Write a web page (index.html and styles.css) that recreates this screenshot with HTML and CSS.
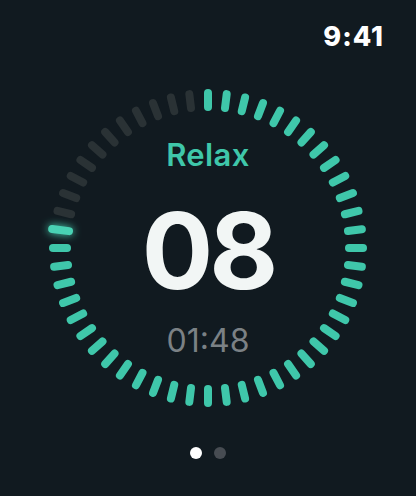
FILE: index.html
```html
<!DOCTYPE html>
<html lang="en">
<head>
<meta charset="utf-8">
<title>Relax timer</title>
<link rel="stylesheet" href="styles.css">
</head>
<body>
<div class="screen">
  <header class="status">
    <span class="clock">9:41</span>
  </header>
  <main class="timer">
    <svg class="ring" viewBox="0 0 336 336" width="336" height="336" aria-hidden="true">
      <defs>
        <filter id="glow" filterUnits="userSpaceOnUse" x="0" y="0" width="336" height="336">
          <feGaussianBlur in="SourceGraphic" stdDeviation="4" result="b"/>
          <feMerge><feMergeNode in="b"/><feMergeNode in="SourceGraphic"/></feMerge>
        </filter>
      </defs>
      <g class="on">
        <line x1="168" y1="13" x2="168" y2="27" transform="rotate(0 168 168)"/>
        <line x1="168" y1="13" x2="168" y2="27" transform="rotate(6.923 168 168)"/>
        <line x1="168" y1="13" x2="168" y2="27" transform="rotate(13.846 168 168)"/>
        <line x1="168" y1="13" x2="168" y2="27" transform="rotate(20.769 168 168)"/>
        <line x1="168" y1="13" x2="168" y2="27" transform="rotate(27.692 168 168)"/>
        <line x1="168" y1="13" x2="168" y2="27" transform="rotate(34.615 168 168)"/>
        <line x1="168" y1="13" x2="168" y2="27" transform="rotate(41.538 168 168)"/>
        <line x1="168" y1="13" x2="168" y2="27" transform="rotate(48.462 168 168)"/>
        <line x1="168" y1="13" x2="168" y2="27" transform="rotate(55.385 168 168)"/>
        <line x1="168" y1="13" x2="168" y2="27" transform="rotate(62.308 168 168)"/>
        <line x1="168" y1="13" x2="168" y2="27" transform="rotate(69.231 168 168)"/>
        <line x1="168" y1="13" x2="168" y2="27" transform="rotate(76.154 168 168)"/>
        <line x1="168" y1="13" x2="168" y2="27" transform="rotate(83.077 168 168)"/>
        <line x1="168" y1="13" x2="168" y2="27" transform="rotate(90 168 168)"/>
        <line x1="168" y1="13" x2="168" y2="27" transform="rotate(96.923 168 168)"/>
        <line x1="168" y1="13" x2="168" y2="27" transform="rotate(103.846 168 168)"/>
        <line x1="168" y1="13" x2="168" y2="27" transform="rotate(110.769 168 168)"/>
        <line x1="168" y1="13" x2="168" y2="27" transform="rotate(117.692 168 168)"/>
        <line x1="168" y1="13" x2="168" y2="27" transform="rotate(124.615 168 168)"/>
        <line x1="168" y1="13" x2="168" y2="27" transform="rotate(131.538 168 168)"/>
        <line x1="168" y1="13" x2="168" y2="27" transform="rotate(138.462 168 168)"/>
        <line x1="168" y1="13" x2="168" y2="27" transform="rotate(145.385 168 168)"/>
        <line x1="168" y1="13" x2="168" y2="27" transform="rotate(152.308 168 168)"/>
        <line x1="168" y1="13" x2="168" y2="27" transform="rotate(159.231 168 168)"/>
        <line x1="168" y1="13" x2="168" y2="27" transform="rotate(166.154 168 168)"/>
        <line x1="168" y1="13" x2="168" y2="27" transform="rotate(173.077 168 168)"/>
        <line x1="168" y1="13" x2="168" y2="27" transform="rotate(180 168 168)"/>
        <line x1="168" y1="13" x2="168" y2="27" transform="rotate(186.923 168 168)"/>
        <line x1="168" y1="13" x2="168" y2="27" transform="rotate(193.846 168 168)"/>
        <line x1="168" y1="13" x2="168" y2="27" transform="rotate(200.769 168 168)"/>
        <line x1="168" y1="13" x2="168" y2="27" transform="rotate(207.692 168 168)"/>
        <line x1="168" y1="13" x2="168" y2="27" transform="rotate(214.615 168 168)"/>
        <line x1="168" y1="13" x2="168" y2="27" transform="rotate(221.538 168 168)"/>
        <line x1="168" y1="13" x2="168" y2="27" transform="rotate(228.462 168 168)"/>
        <line x1="168" y1="13" x2="168" y2="27" transform="rotate(235.385 168 168)"/>
        <line x1="168" y1="13" x2="168" y2="27" transform="rotate(242.308 168 168)"/>
        <line x1="168" y1="13" x2="168" y2="27" transform="rotate(249.231 168 168)"/>
        <line x1="168" y1="13" x2="168" y2="27" transform="rotate(256.154 168 168)"/>
        <line x1="168" y1="13" x2="168" y2="27" transform="rotate(263.077 168 168)"/>
        <line x1="168" y1="13" x2="168" y2="27" transform="rotate(270 168 168)"/>
      </g>
      <g filter="url(#glow)">
        <line class="head" x1="168" y1="11" x2="168" y2="28" transform="rotate(276.923 168 168)"/>
      </g>
      <g class="off">
        <line x1="168" y1="13" x2="168" y2="27" transform="rotate(283.846 168 168)"/>
        <line x1="168" y1="13" x2="168" y2="27" transform="rotate(290.769 168 168)"/>
        <line x1="168" y1="13" x2="168" y2="27" transform="rotate(297.692 168 168)"/>
        <line x1="168" y1="13" x2="168" y2="27" transform="rotate(304.615 168 168)"/>
        <line x1="168" y1="13" x2="168" y2="27" transform="rotate(311.538 168 168)"/>
        <line x1="168" y1="13" x2="168" y2="27" transform="rotate(318.462 168 168)"/>
        <line x1="168" y1="13" x2="168" y2="27" transform="rotate(325.385 168 168)"/>
        <line x1="168" y1="13" x2="168" y2="27" transform="rotate(332.308 168 168)"/>
        <line x1="168" y1="13" x2="168" y2="27" transform="rotate(339.231 168 168)"/>
        <line x1="168" y1="13" x2="168" y2="27" transform="rotate(346.154 168 168)"/>
        <line x1="168" y1="13" x2="168" y2="27" transform="rotate(353.077 168 168)"/>
      </g>
    </svg>
    <div class="readout">
      <div class="phase">Relax</div>
      <div class="count">08</div>
      <div class="remaining">01:48</div>
    </div>
  </main>
  <nav class="pager" aria-label="Pages">
    <span class="dot active"></span>
    <span class="dot"></span>
  </nav>
</div>
</body>
</html>
```

FILE: styles.css
```css
* { box-sizing: border-box; }

html, body {
  margin: 0;
  padding: 0;
  background: #111a20;
}

body {
  font-family: Inter, "Noto Sans", "Liberation Sans", sans-serif;
  color: #f2f6f5;
}

.screen {
  width: 416px;
  height: 496px;
  display: flex;
  flex-direction: column;
  overflow: hidden;
}

.status {
  height: 80px;
  display: flex;
  justify-content: flex-end;
  align-items: flex-start;
  padding: 24px 32px 0 0;
}

.clock {
  font-size: 27px;
  line-height: 26px;
  font-weight: 800;
  color: #ffffff;
  letter-spacing: 1px;
}

.timer {
  display: grid;
  justify-content: center;
  height: 336px;
}

.ring,
.readout {
  grid-area: 1 / 1;
}

.ring {
  display: block;
  overflow: visible;
}

.ring line {
  stroke-width: 8;
  stroke-linecap: round;
}

.ring .on line {
  stroke: #3fc7aa;
}

.ring .head {
  stroke: #4ad2b4;
}

.ring .off line {
  stroke: #2a3235;
}

.readout {
  display: flex;
  flex-direction: column;
  align-items: center;
  padding-top: 60px;
}

.phase {
  font-size: 31px;
  line-height: 30px;
  font-weight: 600;
  color: #3fc7aa;
  letter-spacing: 0.4px;
}

.count {
  margin-top: 28px;
  font-size: 106px;
  line-height: 106px;
  font-weight: 700;
  color: #f2f6f5;
  letter-spacing: -4px;
}

.remaining {
  margin-top: 21px;
  font-size: 32px;
  line-height: 32px;
  font-weight: 400;
  color: #7b8185;
}

.pager {
  display: flex;
  justify-content: center;
  gap: 12px;
  margin-top: 31px;
}

.dot {
  width: 12px;
  height: 12px;
  border-radius: 50%;
  background: #474c52;
}

.dot.active {
  background: #ffffff;
}
```
